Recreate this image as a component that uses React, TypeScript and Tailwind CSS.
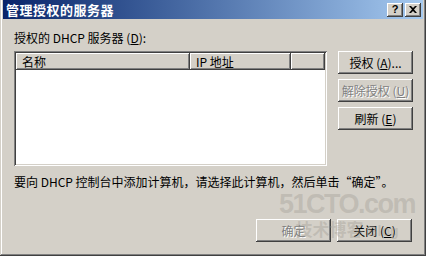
import React from "react";

const FONT = { fontFamily: '"Noto Sans CJK SC", "Liberation Sans", sans-serif' };

function Btn({
  children,
  disabled,
  className = "",
}: {
  children: React.ReactNode;
  disabled?: boolean;
  className?: string;
}) {
  return (
    <div
      className={
        "flex h-[23px] w-[75px] items-center justify-center bg-[#d4d0c8] text-[12px] leading-[12px] shadow-[inset_-1px_-1px_#404040,inset_1px_1px_#ffffff,inset_-2px_-2px_#808080] " +
        (disabled ? "text-[#808080] [text-shadow:1px_1px_#ffffff] " : "text-black ") +
        className
      }
    >
      {children}
    </div>
  );
}

function HeaderCell({ children, className = "" }: { children?: React.ReactNode; className?: string }) {
  return (
    <div
      className={
        "flex h-[17px] items-center bg-[#d4d0c8] text-[12px] leading-[12px] text-black shadow-[inset_-1px_-1px_#404040,inset_1px_1px_#ffffff,inset_-2px_-2px_#808080] " +
        className
      }
    >
      {children}
    </div>
  );
}

export default function App() {
  return (
    <div
      style={FONT}
      className="relative flex h-[256px] w-[426px] flex-col overflow-hidden bg-[#d4d0c8] pl-[3px] pr-[3px] shadow-[inset_-1px_-1px_#404040,inset_1px_0_#d4d0c8,inset_-2px_-2px_#808080,inset_2px_0_#ffffff]"
    >
      {/* Title bar */}
      <div className="flex h-[19px] items-center justify-between bg-gradient-to-r from-[#0a246a] to-[#a6caf0] pl-[3px] pr-[2px]">
        <span className="text-[13px] font-bold leading-[13px] tracking-[0.5px] text-white">管理授权的服务器</span>
        <div className="flex gap-[2px]">
          <div className="flex h-[14px] w-[16px] items-center justify-center bg-[#d4d0c8] shadow-[inset_-1px_-1px_#404040,inset_1px_1px_#ffffff,inset_-2px_-2px_#808080]">
            <span className="text-[11px] font-bold leading-[11px] text-black" style={{ fontFamily: '"Liberation Sans", sans-serif' }}>?</span>
          </div>
          <div className="flex h-[14px] w-[16px] items-center justify-center bg-[#d4d0c8] shadow-[inset_-1px_-1px_#404040,inset_1px_1px_#ffffff,inset_-2px_-2px_#808080]">
            <svg width="8" height="7" viewBox="0 0 8 7">
              <path d="M0 0h2l2 2 2-2h2L5 3.5 8 7H6L4 5 2 7H0l3-3.5z" fill="#000" />
            </svg>
          </div>
        </div>
      </div>

      {/* Body */}
      <div className="flex flex-col pl-[11px] pr-[10px]">
        <div className="mt-[13px] text-[12px] leading-[12px] text-black">
          授权的 DHCP 服务器 (<u>D</u>):
        </div>

        <div className="mt-[7px] flex gap-[11px]">
          {/* List view */}
          <div className="flex h-[115px] w-[313px] flex-col bg-white p-[2px] shadow-[inset_1px_1px_#808080,inset_-1px_-1px_#ffffff,inset_2px_2px_#404040,inset_-2px_-2px_#d4d0c8]">
            <div className="flex">
              <HeaderCell className="w-[174px] pl-[6px]">名称</HeaderCell>
              <HeaderCell className="w-[101px] pl-[6px]">IP 地址</HeaderCell>
              <HeaderCell className="flex-1" />
            </div>
            <div className="flex-1 bg-white" />
          </div>

          {/* Side buttons */}
          <div className="flex flex-col gap-[5px]">
            <Btn>
              授权 (<u>A</u>)...
            </Btn>
            <Btn disabled>
              解除授权 (<u>U</u>)
            </Btn>
            <Btn>
              刷新 (<u>E</u>)
            </Btn>
          </div>
        </div>

        <div className="mt-[10px] whitespace-nowrap text-[12px] leading-[12px] text-black">
          要向 DHCP 控制台中添加计算机，请选择此计算机，然后单击“确定”。
        </div>

        <div className="mt-[31px] flex justify-end gap-[6px] pr-[1px]">
          <Btn disabled>确定</Btn>
          <Btn>
            关闭 (<u>C</u>)
          </Btn>
        </div>
      </div>

      {/* Watermark */}
      <div className="pointer-events-none absolute left-[288px] top-[190px] flex w-[118px] flex-col items-center">
        <span
          className="text-[27px] font-bold leading-[28px] tracking-[-1.5px] text-[#9a968e]/35"
          style={{ fontFamily: '"Liberation Sans Narrow", "Liberation Sans", sans-serif' }}
        >
          51CTO.com
        </span>
        <span className="text-[17px] font-bold leading-[22px] text-[#9a968e]/35">
          技术博客 <span style={{ fontFamily: '"Liberation Sans", sans-serif' }} className="text-[14px]">Blog</span>
        </span>
      </div>
    </div>
  );
}
